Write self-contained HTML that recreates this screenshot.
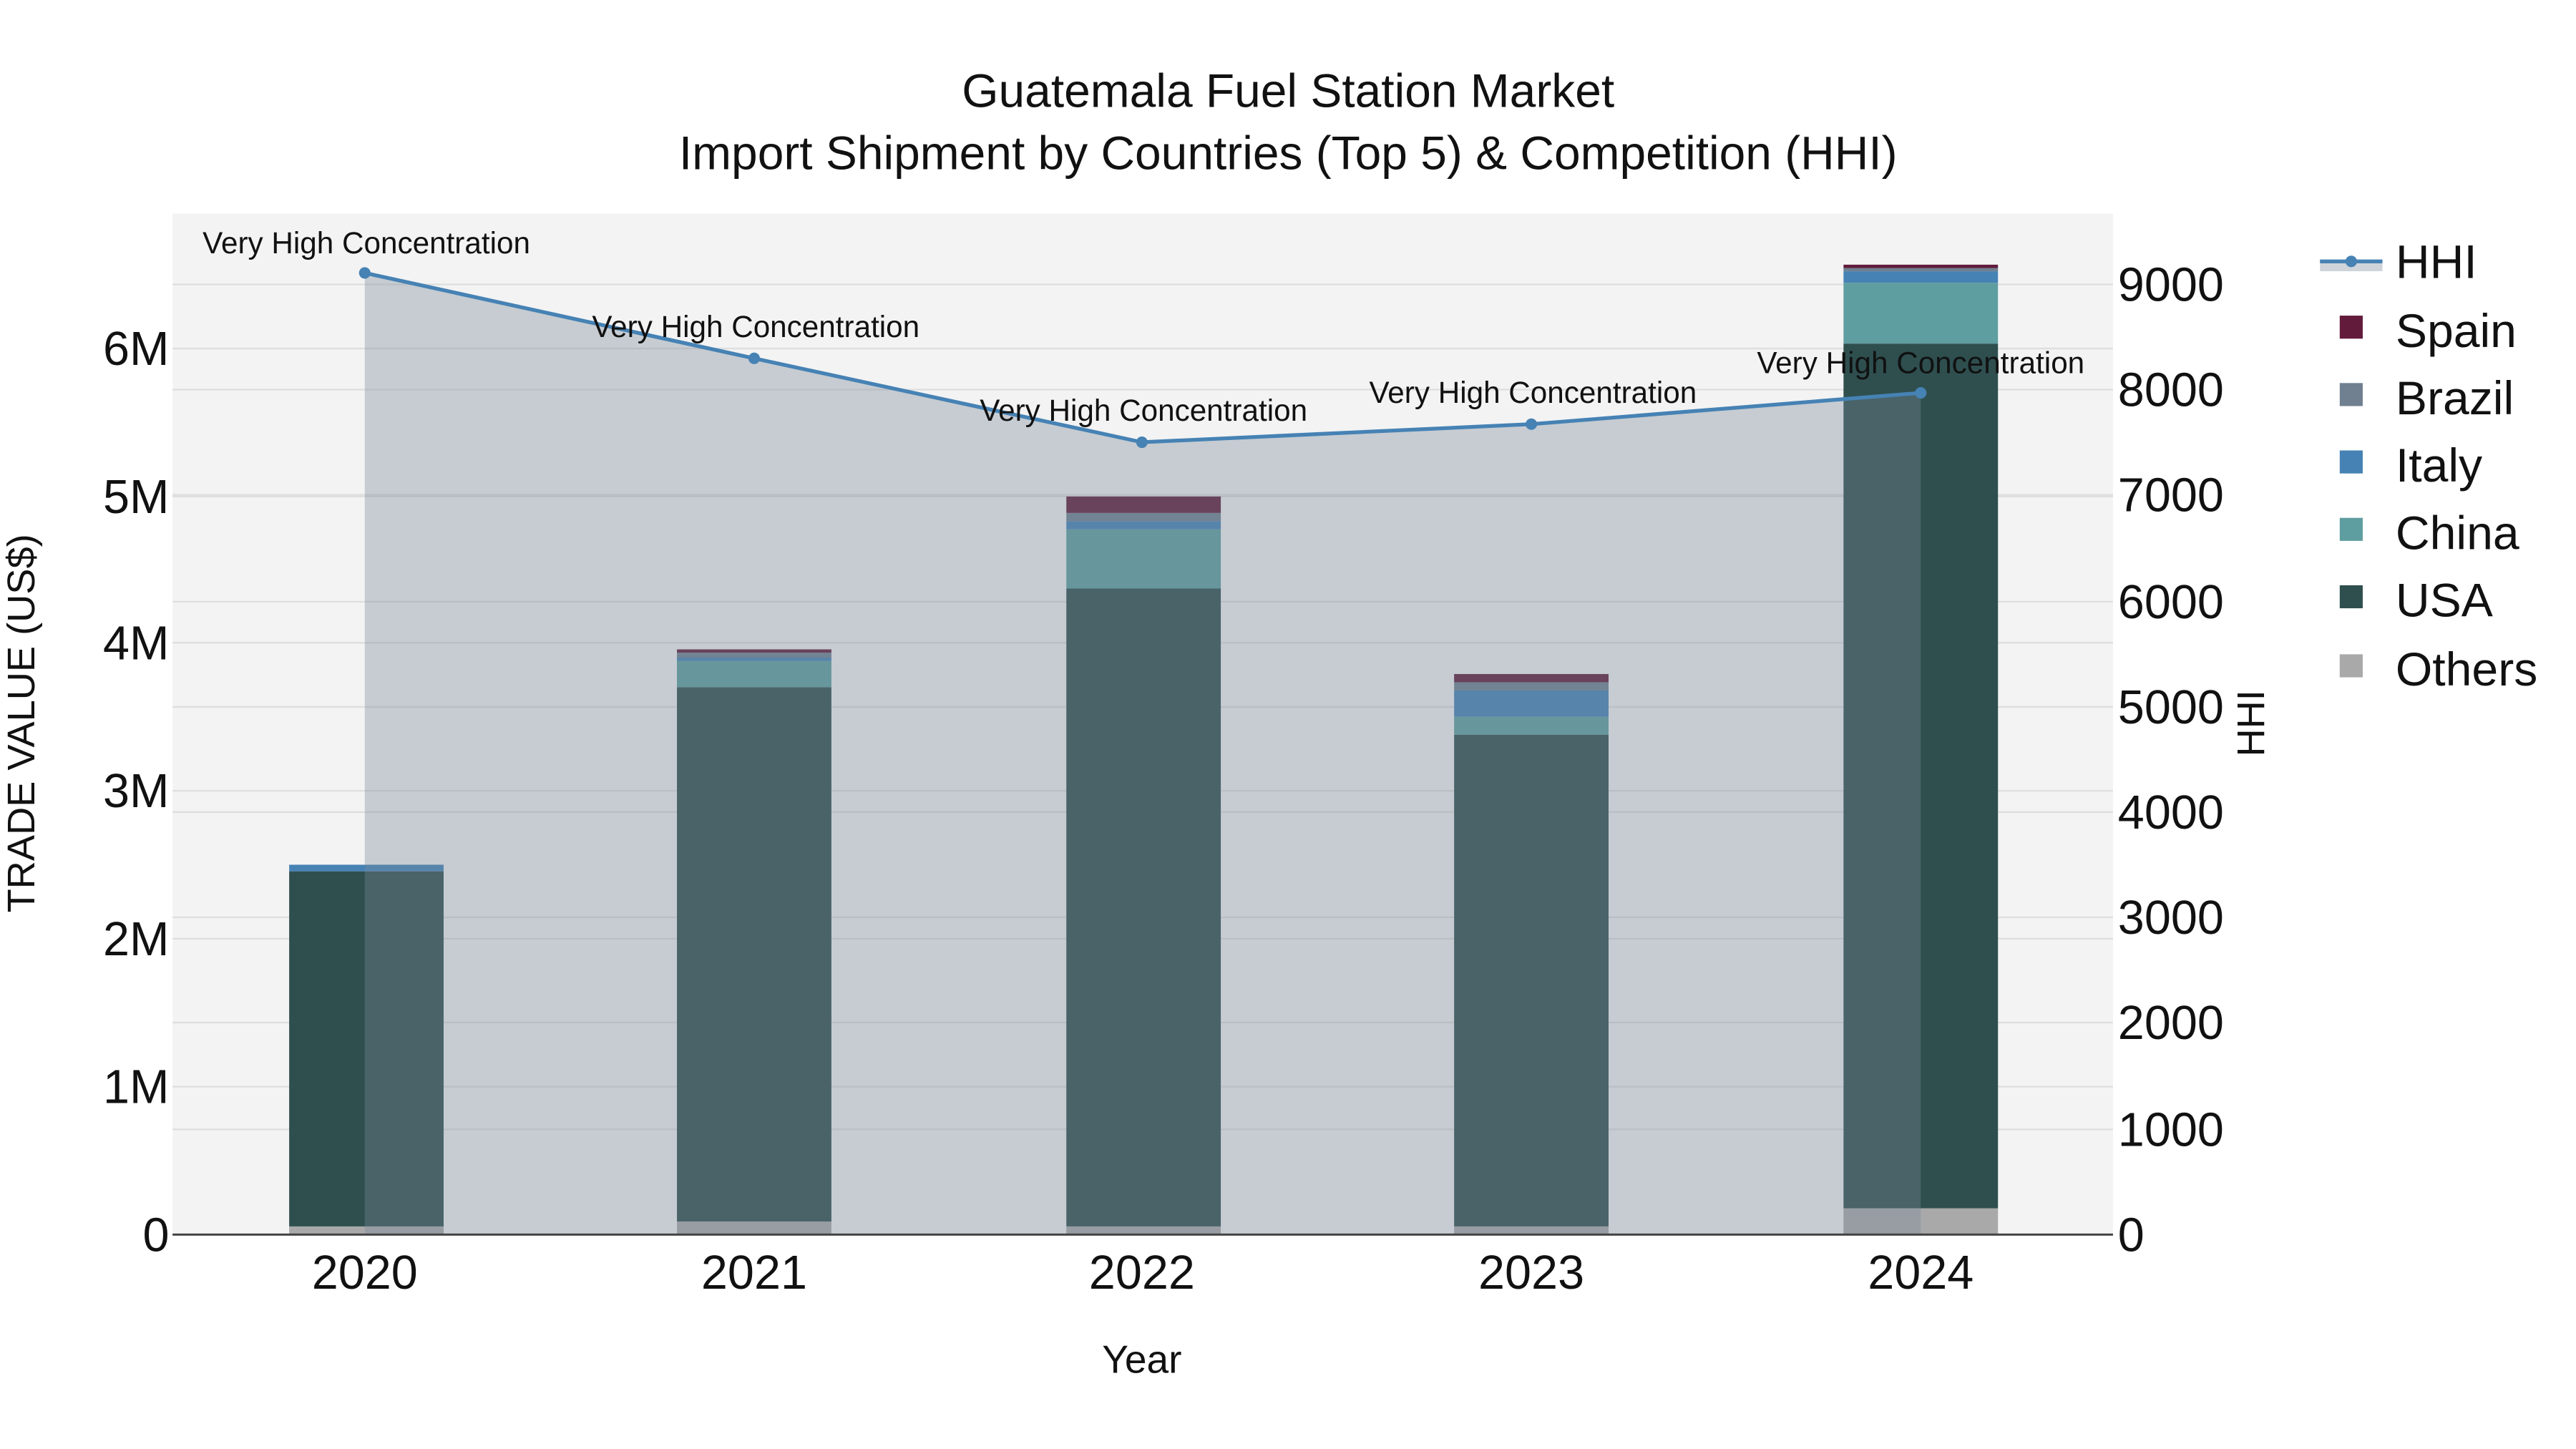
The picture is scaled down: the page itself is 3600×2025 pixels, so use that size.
<!DOCTYPE html>
<html><head><meta charset="utf-8"><style>
html,body{margin:0;padding:0;background:#fff;}
svg{display:block;}
text{font-family:"Liberation Sans",sans-serif;fill:#111;}
</style></head><body>
<svg width="3600" height="2025" viewBox="0 0 1567.8 881.4" preserveAspectRatio="none" xmlns="http://www.w3.org/2000/svg">
<rect x="0" y="0" width="1568" height="882" fill="#fff"/>
<rect x="105" y="130" width="1181" height="621" fill="#f3f3f3"/>
<g stroke="#dedede" stroke-width="1">
<line x1="105" x2="1286" y1="661" y2="661"/><line x1="105" x2="1286" y1="571" y2="571"/>
<line x1="105" x2="1286" y1="481" y2="481"/><line x1="105" x2="1286" y1="391" y2="391"/>
<line x1="105" x2="1286" y1="302" y2="302"/><line x1="105" x2="1286" y1="212" y2="212"/>
<line x1="105" x2="1286" y1="687" y2="687"/><line x1="105" x2="1286" y1="622" y2="622"/>
<line x1="105" x2="1286" y1="558" y2="558"/><line x1="105" x2="1286" y1="494" y2="494"/>
<line x1="105" x2="1286" y1="430" y2="430"/><line x1="105" x2="1286" y1="366" y2="366"/>
<line x1="105" x2="1286" y1="301" y2="301"/><line x1="105" x2="1286" y1="237" y2="237"/>
<line x1="105" x2="1286" y1="173" y2="173"/>
</g>
<g>
<rect x="176" y="746" width="94" height="5" fill="#a9a9a9"/>
<rect x="176" y="530" width="94" height="216" fill="#2f4f4f"/>
<rect x="176" y="526" width="94" height="4" fill="#4682b4"/>

<rect x="412" y="743" width="94" height="8" fill="#a9a9a9"/>
<rect x="412" y="418" width="94" height="325" fill="#2f4f4f"/>
<rect x="412" y="402" width="94" height="16" fill="#5f9ea0"/>
<rect x="412" y="400" width="94" height="2" fill="#4682b4"/>
<rect x="412" y="397" width="94" height="3" fill="#708090"/>
<rect x="412" y="395" width="94" height="2" fill="#621b3a"/>

<rect x="649" y="746" width="94" height="5" fill="#a9a9a9"/>
<rect x="649" y="358" width="94" height="388" fill="#2f4f4f"/>
<rect x="649" y="322" width="94" height="36" fill="#5f9ea0"/>
<rect x="649" y="317" width="94" height="5" fill="#4682b4"/>
<rect x="649" y="312" width="94" height="5" fill="#708090"/>
<rect x="649" y="302" width="94" height="10" fill="#621b3a"/>

<rect x="885" y="746" width="94" height="5" fill="#a9a9a9"/>
<rect x="885" y="447" width="94" height="299" fill="#2f4f4f"/>
<rect x="885" y="436" width="94" height="11" fill="#5f9ea0"/>
<rect x="885" y="420" width="94" height="16" fill="#4682b4"/>
<rect x="885" y="415" width="94" height="5" fill="#708090"/>
<rect x="885" y="410" width="94" height="5" fill="#621b3a"/>

<rect x="1122" y="735" width="94" height="16" fill="#a9a9a9"/>
<rect x="1122" y="209" width="94" height="526" fill="#2f4f4f"/>
<rect x="1122" y="172" width="94" height="37" fill="#5f9ea0"/>
<rect x="1122" y="165" width="94" height="7" fill="#4682b4"/>
<rect x="1122" y="163" width="94" height="2" fill="#708090"/>
<rect x="1122" y="161" width="94" height="2" fill="#621b3a"/>
</g>
<polygon points="222,751 222,166 459,218 695,269 932,258 1169,239 1169,751" fill="rgb(119,136,153)" fill-opacity="0.36"/>
<line x1="105" x2="1286" y1="751" y2="751" stroke="#444" stroke-width="1.3"/>
<polyline points="222,166 459,218 695,269 932,258 1169,239" fill="none" stroke="#4682b4" stroke-width="2.3"/>
<g fill="#4682b4"><circle cx="222" cy="166" r="3.5"/><circle cx="459" cy="218" r="3.5"/><circle cx="695" cy="269" r="3.5"/><circle cx="932" cy="258" r="3.5"/><circle cx="1169" cy="239" r="3.5"/></g>
<g font-size="18.4" text-anchor="middle">
<text x="223" y="154">Very High Concentration</text>
<text x="460" y="205">Very High Concentration</text>
<text x="696" y="256">Very High Concentration</text>
<text x="933" y="245">Very High Concentration</text>
<text x="1169" y="227">Very High Concentration</text>
</g>
<g font-size="28.7" text-anchor="middle">
<text x="784" y="65">Guatemala Fuel Station Market</text>
<text x="784" y="103">Import Shipment by Countries (Top 5) &amp; Competition (HHI)</text>
</g>
<g font-size="29" text-anchor="end">
<text x="103" y="761">0</text><text x="103" y="671">1M</text><text x="103" y="581">2M</text>
<text x="103" y="491">3M</text><text x="103" y="401">4M</text><text x="103" y="312">5M</text><text x="103" y="222">6M</text>
</g>
<g font-size="29">
<text x="1289" y="761">0</text><text x="1289" y="697">1000</text><text x="1289" y="632">2000</text>
<text x="1289" y="568">3000</text><text x="1289" y="504">4000</text><text x="1289" y="440">5000</text>
<text x="1289" y="376">6000</text><text x="1289" y="311">7000</text><text x="1289" y="247">8000</text>
<text x="1289" y="183">9000</text>
</g>
<g font-size="29" text-anchor="middle">
<text x="222" y="784">2020</text><text x="459" y="784">2021</text><text x="695" y="784">2022</text>
<text x="932" y="784">2023</text><text x="1169" y="784">2024</text>
</g>
<text x="695" y="835" font-size="24" text-anchor="middle">Year</text>
<text transform="translate(21,440) rotate(-90)" font-size="23.6" text-anchor="middle">TRADE VALUE (US$)</text>
<text transform="translate(1378,440) rotate(-90)" font-size="23.6" text-anchor="middle">HHI</text>
<rect x="1412" y="158" width="38" height="7" fill="rgb(119,136,153)" fill-opacity="0.36"/>
<line x1="1412" x2="1450" y1="159" y2="159" stroke="#4682b4" stroke-width="2.3"/>
<circle cx="1431" cy="159" r="3.5" fill="#4682b4"/>
<rect x="1424" y="192" width="14" height="14" fill="#621b3a"/>
<rect x="1424" y="233" width="14" height="14" fill="#708090"/>
<rect x="1424" y="274" width="14" height="14" fill="#4682b4"/>
<rect x="1424" y="315" width="14" height="14" fill="#5f9ea0"/>
<rect x="1424" y="356" width="14" height="14" fill="#2f4f4f"/>
<rect x="1424" y="398" width="14" height="14" fill="#a9a9a9"/>
<g font-size="28.8">
<text x="1458" y="169">HHI</text><text x="1458" y="211">Spain</text><text x="1458" y="252">Brazil</text>
<text x="1458" y="293">Italy</text><text x="1458" y="334">China</text><text x="1458" y="375">USA</text>
<text x="1458" y="417">Others</text>
</g>
</svg>
</body></html>
